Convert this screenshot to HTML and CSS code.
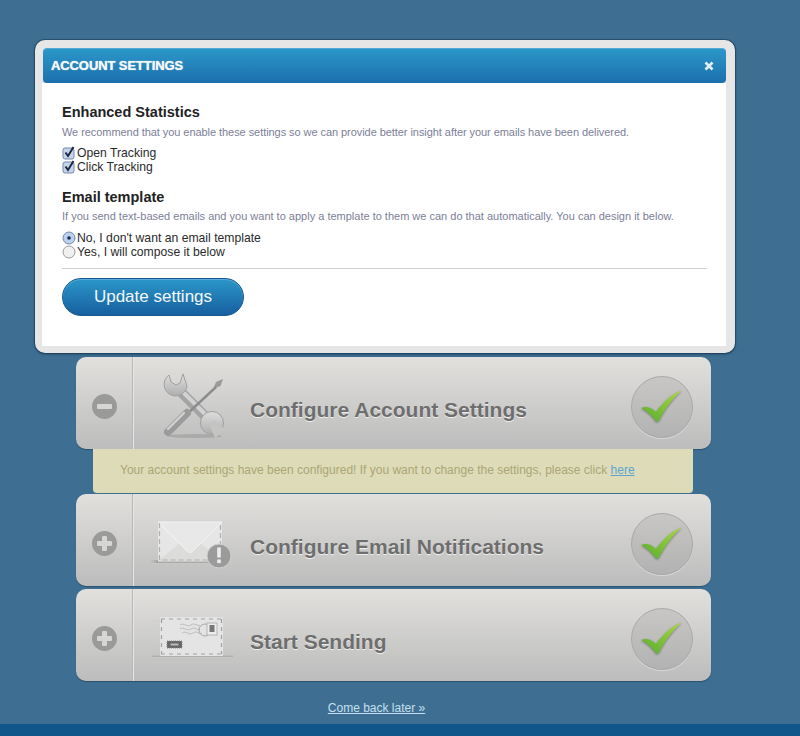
FILE: index.html
```html
<!DOCTYPE html>
<html lang="en">
<head>
    <meta charset="UTF-8">
    <title>Account Settings</title>
    <link rel="stylesheet" href="styles.css">
</head>
<body>
    <!-- Settings dialog -->
    <div class="modal">
        <div class="modal-header">
            <span class="modal-title">ACCOUNT SETTINGS</span>
            <svg class="modal-close" width="10" height="10" viewBox="0 0 10 10"><path d="M1.5 1.5l7 7M8.5 1.5l-7 7" stroke="#e4eef5" stroke-width="2.6" fill="none"/></svg>
        </div>
        <div class="modal-body">
            <h2>Enhanced Statistics</h2>
            <p class="hint hint-first">We recommend that you enable these settings so we can provide better insight after your emails have been delivered.</p>
            <div class="option">
                <svg width="14" height="14" viewBox="0 0 14 14"><rect x="1" y="2" width="11" height="11" rx="2" fill="#c6d5ea" stroke="#7488ab"/><path d="M3.5 6.5l2.5 3.5 5.5-9" stroke="#1c2a44" stroke-width="2" fill="none"/></svg>
                Open Tracking
            </div>
            <div class="option">
                <svg width="14" height="14" viewBox="0 0 14 14"><rect x="1" y="2" width="11" height="11" rx="2" fill="#c6d5ea" stroke="#7488ab"/><path d="M3.5 6.5l2.5 3.5 5.5-9" stroke="#1c2a44" stroke-width="2" fill="none"/></svg>
                Click Tracking
            </div>

            <h2 class="second">Email template</h2>
            <p class="hint hint-second">If you send text-based emails and you want to apply a template to them we can do that automatically. You can design it below.</p>
            <div class="option first-radio">
                <svg width="14" height="14" viewBox="0 0 14 14"><circle cx="7" cy="7" r="6" fill="#b9d0ee" stroke="#7488ab"/><circle cx="7" cy="7" r="1.8" fill="#1c2a44"/></svg>
                No, I don't want an email template
            </div>
            <div class="option">
                <svg width="14" height="14" viewBox="0 0 14 14"><circle cx="7" cy="7" r="6" fill="#f0f0f0" stroke="#9a9a9a"/></svg>
                Yes, I will compose it below
            </div>
            <hr>
            <button class="update-btn">Update settings</button>
        </div>
    </div>

    <div class="steps">
        <!-- Step 1 -->
        <div class="step">
            <div class="step-toggle">
                <span class="toggle-icon"><span class="bar"></span></span>
            </div>
            <div class="step-art">
                <svg class="art-tools" width="84" height="76" viewBox="0 0 84 76">
                    <defs>
                        <linearGradient id="metal" x1="0" y1="0" x2="0" y2="1"><stop offset="0" stop-color="#dedede"/><stop offset="1" stop-color="#aeaeae"/></linearGradient>
                    </defs>
                    <ellipse cx="45" cy="68" rx="27" ry="2" fill="#8e8e8e" opacity=".45"/>
                    <!-- wrench -->
                    <path d="M27 20L61 54" stroke="#a4a4a4" stroke-width="10" fill="none"/>
                    <path d="M29 20L60 51" stroke="#d2d2d2" stroke-width="4" fill="none"/>
                    <path d="M19 7A11.5 11.5 0 1 0 37 18L33 6l-3 9-4 2-5-3z" fill="url(#metal)" stroke="#a0a0a0"/>
                    <circle cx="62" cy="55" r="11.5" fill="url(#metal)" stroke="#a0a0a0"/>
                    <path d="M59 56l6-4 10 10-10 8z" fill="#c4c4c3"/>
                    <!-- screwdriver -->
                    <path d="M73 11l-7 3-2 5 1.500 1 5-2z" fill="#9a9a9a"/>
                    <path d="M66 19L36 47" stroke="#8c8c8c" stroke-width="2.4" fill="none"/>
                    <path d="M37 45L18 64" stroke="#9b9b9b" stroke-width="8" stroke-linecap="round" fill="none"/>
                    <path d="M34 45L18 61" stroke="#d4d4d4" stroke-width="2.2" stroke-linecap="round" fill="none"/>
                </svg>
            </div>
            <div class="step-title">Configure Account Settings</div>
            <div class="step-check">
                <svg width="44" height="36" viewBox="0 0 44 36">
                    <defs>
                        <linearGradient id="tick" x1="1" y1="0" x2="0" y2="1"><stop offset="0" stop-color="#a9d845"/><stop offset="1" stop-color="#56ad2c"/></linearGradient>
                    </defs>
                    <path d="M1 19c5-2 10-1 15 4C23 13 32 5 42 1 32 10 25 20 19 31c-1 2-3 2-4 0C11 26 7 22 1 19z" fill="url(#tick)"/>
                </svg>
            </div>
        </div>
        <div class="step-note">Your account settings have been configured! If you want to change the settings, please click <a href="#">here</a></div>

        <!-- Step 2 -->
        <div class="step">
            <div class="step-toggle">
                <span class="toggle-icon"><span class="bar"></span><span class="bar bar-v"></span></span>
            </div>
            <div class="step-art">
                <svg class="art-mail" width="84" height="56" viewBox="0 0 84 56">
                    <defs>
                        <linearGradient id="shadow-left" x1="0" y1="0" x2="1" y2="0"><stop offset="0" stop-color="#999" stop-opacity="0"/><stop offset="1" stop-color="#8a8a8a"/></linearGradient>
                    </defs>
                    <rect x="0" y="40" width="12" height="3" fill="url(#shadow-left)"/>
                    <rect x="8" y="2" width="64" height="40" fill="#e6e6e6"/>
                    <path d="M8 41l22-18h20l22 18z" fill="#dcdcdb"/>
                    <path d="M8 2h64L43 31c-2 2-4 2-6 0z" fill="#e8e8e8" stroke="#f3f3f3"/>
                    <path d="M9.500 3v37h61V3" fill="none" stroke="#b0b0b0" stroke-width="1.200" stroke-dasharray="5 3"/>
                    <rect x="8" y="41.500" width="64" height="1.500" fill="#aaa"/>
                    <circle cx="69" cy="36" r="12" fill="#9b9b9b" stroke="#d2d2d2"/>
                    <rect x="67.200" y="27.500" width="3.600" height="10" fill="#ededed"/>
                    <rect x="67.200" y="39.500" width="3.600" height="3.600" fill="#ededed"/>
                </svg>
            </div>
            <div class="step-title">Configure Email Notifications</div>
            <div class="step-check">
                <svg width="44" height="36" viewBox="0 0 44 36"><path d="M1 19c5-2 10-1 15 4C23 13 32 5 42 1 32 10 25 20 19 31c-1 2-3 2-4 0C11 26 7 22 1 19z" fill="url(#tick)"/></svg>
            </div>
        </div>

        <!-- Step 3 -->
        <div class="step">
            <div class="step-toggle">
                <span class="toggle-icon"><span class="bar"></span><span class="bar bar-v"></span></span>
            </div>
            <div class="step-art">
                <svg class="art-mail" width="84" height="56" viewBox="0 0 84 56">
                    <rect x="2" y="40.500" width="81" height="1.500" fill="#a4a4a4" opacity=".6"/>
                    <path d="M3 6h7M2 10h8M3 14h7M2 18h8M4 22h6M4 26h6" stroke="#cfcfcf"/>
                    <rect x="10" y="2" width="63" height="39" rx="1" fill="#e4e4e4"/>
                    <path d="M11 4h61M11 39h61M11.500 4v35M71.500 4v35" fill="none" stroke="#a2a2a2" stroke-width="1.200" stroke-dasharray="4 4"/>
                    <path d="M30 10c4-3 7 3 11 0s6 2 9 0M30 14c4-3 7 3 11 0s6 2 9 0M32 18c4-3 7 3 11 0s6 2 9 0" fill="none" stroke="#bcbcbc"/>
                    <circle cx="55" cy="15" r="6" fill="none" stroke="#a8a8a8"/>
                    <rect x="57" y="8" width="10" height="12" fill="#ececec" stroke="#b4b4b4"/>
                    <rect x="59.500" y="10" width="5" height="7" fill="#777"/>
                    <rect x="17" y="26" width="15" height="7" fill="#666" stroke="#888" stroke-dasharray="1 1"/>
                    <rect x="20.500" y="28.500" width="8" height="2" fill="#bbb"/>
                </svg>
            </div>
            <div class="step-title">Start Sending</div>
            <div class="step-check">
                <svg width="44" height="36" viewBox="0 0 44 36"><path d="M1 19c5-2 10-1 15 4C23 13 32 5 42 1 32 10 25 20 19 31c-1 2-3 2-4 0C11 26 7 22 1 19z" fill="url(#tick)"/></svg>
            </div>
        </div>
    </div>

    <p class="later"><a href="#">Come back later »</a></p>
    <div class="footer-bar"></div>
</body>
</html>
```

FILE: styles.css
```css
/* General Styling */
html, body {
    height: 100%;
}

body {
    display: flex;
    flex-direction: column;
    margin: 0;
    overflow: hidden;
    font-family: "Liberation Sans", Arial, sans-serif;
    background-color: #3e6f93;
}

/* Dialog */
.modal {
    position: absolute;
    left: 35px;
    top: 40px;
    box-sizing: border-box;
    width: 700px;
    height: 313px;
    padding: 8px 9px 7px 7px;
    background-color: #e6e6e6;
    border-radius: 10px;
    box-shadow: 0 0 0 1px rgba(30, 60, 85, 0.55), 0 1px 3px rgba(20, 50, 75, 0.8);
    z-index: 2;
}

.modal-header {
    display: flex;
    align-items: center;
    justify-content: space-between;
    box-sizing: border-box;
    height: 35px;
    padding: 0 12px 1px 8px;
    margin-left: 1px;
    background: linear-gradient(#2b97c9, #1c6fac);
    border-top: 1px solid #54aad4;
    border-radius: 4px;
}

.modal-title {
    font-size: 13px;
    font-weight: bold;
    color: #f4f8fb;
    letter-spacing: -0.1px;
    text-shadow: 0 0 1px #f4f8fb;
}

.modal-body {
    box-sizing: border-box;
    height: 263px;
    padding: 21px 19px 0 20px;
    background-color: #fff;
}

.modal-body h2 {
    margin: 0;
    font-size: 14.5px;
    line-height: 17px;
    color: #222;
}

.modal-body h2.second {
    margin-top: 15px;
}

.hint {
    margin: 4px 0 7px;
    font-size: 11px;
    line-height: 14px;
    color: #7c8099;
}

.hint-first {
    letter-spacing: -0.06px;
}

.hint-second {
    margin-top: 3px;
}

.option {
    display: flex;
    align-items: center;
    gap: 1px;
    height: 14px;
    font-size: 12.2px;
    color: #2a2a2a;
}

.first-radio {
    margin-top: 8px;
}

.modal-body hr {
    height: 1px;
    margin: 9px 0;
    border: none;
    background-color: #cfcfcf;
}

.update-btn {
    display: block;
    width: 182px;
    height: 38px;
    border: 1px solid #17598f;
    border-radius: 19px;
    background: linear-gradient(#2b97c9, #175f9f);
    box-shadow: inset 0 1px 0 #58aed8;
    font-family: inherit;
    font-size: 17px;
    color: #f4f8fb;
}

/* Steps */
.steps {
    display: flex;
    flex-direction: column;
    align-items: flex-start;
    padding: 357px 0 0 76px;
}

.step {
    display: flex;
    align-items: center;
    box-sizing: border-box;
    width: 635px;
    height: 92px;
    margin-bottom: 3px;
    background: linear-gradient(#e1e0dd, #bcbcbc);
    border-radius: 10px;
    box-shadow: 0 1px 1px rgba(20, 50, 75, 0.5);
}

.step-toggle {
    display: flex;
    flex: none;
    align-items: center;
    justify-content: center;
    align-self: stretch;
    box-sizing: border-box;
    width: 57px;
    padding-top: 6px;
    border-right: 1px solid #b8b8b8;
    box-shadow: 1px 0 0 #e6e6e6;
}

.toggle-icon {
    position: relative;
    display: block;
    width: 25px;
    height: 25px;
    border-radius: 50%;
    background-color: #9a9a98;
}

.bar {
    position: absolute;
    left: 5px;
    top: 10px;
    width: 15px;
    height: 5px;
    background-color: #d6d6d4;
    border-radius: 1px;
}

.bar-v {
    left: 10px;
    top: 5px;
    width: 5px;
    height: 15px;
}

.step-art {
    display: flex;
    flex: none;
    box-sizing: border-box;
    width: 117px;
    padding-left: 17px;
}

.art-tools {
    margin-top: 6px;
}

.art-mail {
    margin-top: 16px;
}

.step-title {
    flex: 1;
    padding-top: 14px;
    font-size: 21px;
    font-weight: bold;
    color: #6e6e6e;
    text-shadow: 0 1px 0 #eee;
}

.step-check {
    display: flex;
    flex: none;
    align-items: center;
    justify-content: center;
    box-sizing: border-box;
    width: 62px;
    height: 62px;
    margin: 8px 18px 0 0;
    border: 1px solid #a9a9a9;
    border-radius: 50%;
    background: linear-gradient(#c8c7c5, #b2b2b2);
    box-shadow: 0 1px 0 #d8d8d8;
}

.step-check svg {
    filter: drop-shadow(0 1px 1px rgba(0, 0, 0, 0.35));
}

.step-note {
    box-sizing: border-box;
    width: 600px;
    height: 44px;
    margin: -3px 0 1px 17px;
    padding-left: 27px;
    background-color: #dedbb9;
    border-radius: 0 0 4px 4px;
    font-size: 12px;
    line-height: 42px;
    color: #aba673;
}

.step-note a {
    color: #5da5cf;
}

/* Bottom */
.later {
    margin: 17px 0 0;
    padding-right: 47px;
    text-align: center;
    font-size: 12px;
}

.later a {
    color: #c5e0ef;
}

.footer-bar {
    margin-top: auto;
    height: 12px;
    background-color: #10568a;
}
```
